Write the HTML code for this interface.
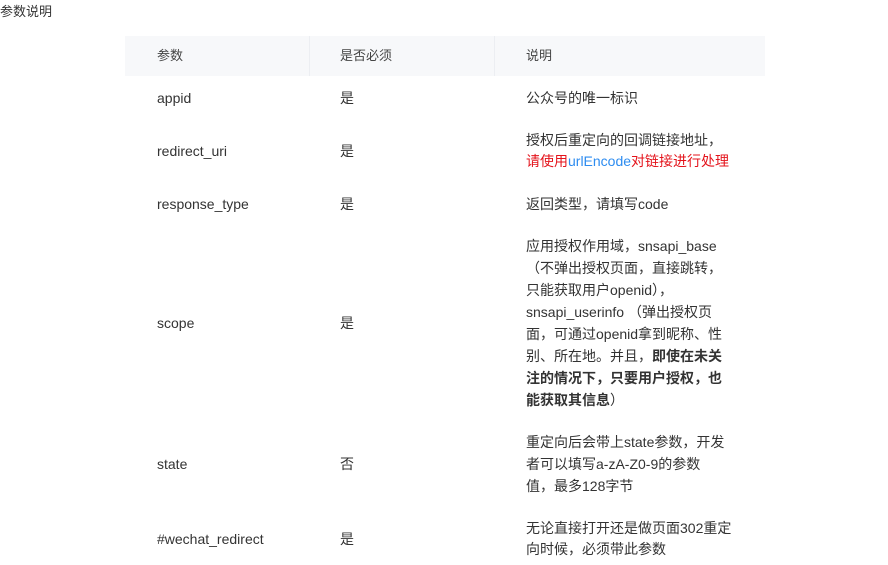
<!DOCTYPE html>
<html><head><meta charset="utf-8"><style>
body{margin:0;width:888px;height:565px;background:#fff;position:relative;overflow:hidden;font-family:"Liberation Sans","Noto Sans CJK SC",sans-serif;color:#333;font-size:14px}
.t{position:absolute;white-space:nowrap;line-height:22px}
.h{position:absolute;left:125px;top:36px;width:640px;height:40px;background:#f7f8fa}
.d{position:absolute;top:36px;width:1px;height:40px;background:#eceef2}
b{font-weight:bold}
.r{color:#e4131b}.bl{color:#2d8cf0}
</style></head><body>
<div class="t" style="left:0;top:1px;font-size:13px">参数说明</div>
<div class="h"></div><div class="d" style="left:309px"></div><div class="d" style="left:494px"></div>
<div class="t" style="left:157px;top:45px;font-size:13px;color:#444">参数</div>
<div class="t" style="left:340px;top:45px;font-size:13px;color:#444">是否必须</div>
<div class="t" style="left:526px;top:45px;font-size:13px;color:#444">说明</div>

<div class="t" style="left:157px;top:87px">appid</div>
<div class="t" style="left:340px;top:87px">是</div>
<div class="t" style="left:526px;top:87px">公众号的唯一标识</div>

<div class="t" style="left:157px;top:140px">redirect_uri</div>
<div class="t" style="left:340px;top:140px">是</div>
<div class="t" style="left:526px;top:129px">授权后重定向的回调链接地址，</div>
<div class="t r" style="left:526px;top:150px">请使用<span class="bl">urlEncode</span>对链接进行处理</div>

<div class="t" style="left:157px;top:193px">response_type</div>
<div class="t" style="left:340px;top:193px">是</div>
<div class="t" style="left:526px;top:193px">返回类型，请填写code</div>

<div class="t" style="left:157px;top:312px">scope</div>
<div class="t" style="left:340px;top:312px">是</div>
<div class="t" style="left:526px;top:235px">应用授权作用域，snsapi_base</div>
<div class="t" style="left:526px;top:257px">（不弹出授权页面，直接跳转，</div>
<div class="t" style="left:526px;top:279px">只能获取用户openid），</div>
<div class="t" style="left:526px;top:301px">snsapi_userinfo （弹出授权页</div>
<div class="t" style="left:526px;top:323px">面，可通过openid拿到昵称、性</div>
<div class="t" style="left:526px;top:345px">别、所在地。并且，<b>即使在未关</b></div>
<div class="t" style="left:526px;top:367px"><b>注的情况下，只要用户授权，也</b></div>
<div class="t" style="left:526px;top:389px"><b>能获取其信息</b>）</div>

<div class="t" style="left:157px;top:453px">state</div>
<div class="t" style="left:340px;top:453px">否</div>
<div class="t" style="left:526px;top:431px">重定向后会带上state参数，开发</div>
<div class="t" style="left:526px;top:453px">者可以填写a-zA-Z0-9的参数</div>
<div class="t" style="left:526px;top:475px">值，最多128字节</div>

<div class="t" style="left:157px;top:528px">#wechat_redirect</div>
<div class="t" style="left:340px;top:528px">是</div>
<div class="t" style="left:526px;top:517px">无论直接打开还是做页面302重定</div>
<div class="t" style="left:526px;top:538px">向时候，必须带此参数</div>
</body></html>
